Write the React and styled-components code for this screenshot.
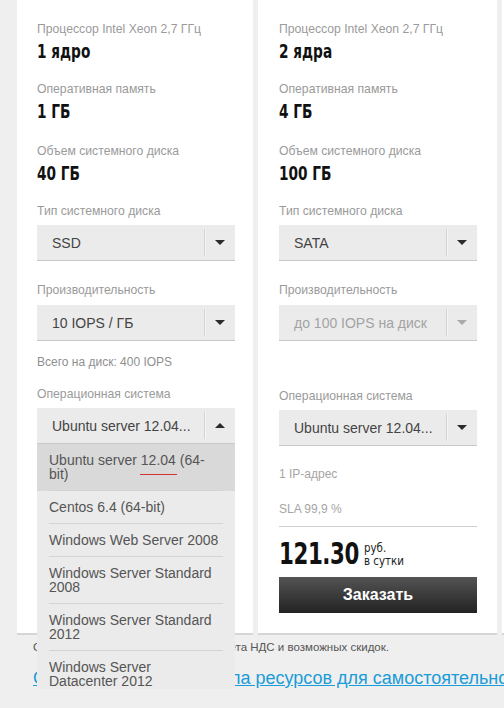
import React from "react";
import styled, { createGlobalStyle } from "styled-components";

const GlobalStyle = createGlobalStyle`
  body {
    margin: 0;
    background: #efefef;
    overflow: hidden;
    font-family: "Liberation Sans", Arial, sans-serif;
  }
`;

const Page = styled.div`
  width: max-content;
`;

const CardsRow = styled.div`
  display: flex;
  align-items: stretch;
  gap: 5px;
  padding-left: 17px;
`;

const Card = styled.div`
  flex-shrink: 0;
  width: ${(p) => p.$width}px;
  box-sizing: border-box;
  padding: 21px 20px 20px ${(p) => p.$padLeft ?? 20}px;
  background: #fff;
  box-shadow: 0 2px 0 #d5d5d5;
  display: flex;
  flex-direction: column;
`;

const Field = styled.div`
  margin-top: ${(p) => p.$mt ?? 0}px;
  display: flex;
  flex-direction: column;
`;

const Label = styled.div`
  font-size: 12.2px;
  line-height: 16px;
  color: #9a9a9a;
`;

// narrow DIN-like figures: condensed face squeezed a bit more
const Value = styled.div`
  margin-top: 3px;
  font-family: "DejaVu Sans Condensed", "DejaVu Sans", sans-serif;
  font-stretch: condensed;
  font-weight: bold;
  font-size: 19px;
  line-height: 22px;
  color: #111;
  transform: scaleX(0.8);
  transform-origin: left center;
`;

const SelectWrap = styled.div`
  position: relative;
  margin-top: ${(p) => p.$mt ?? 6}px;
  width: 198px;
`;

const SelectBox = styled.div`
  height: 36px;
  box-sizing: border-box;
  background: #ebebeb;
  border-bottom: 1px solid #c8c8c8;
  display: flex;
  align-items: center;
`;

const SelectText = styled.span`
  flex: 1;
  padding-left: 15px;
  font-size: 14px;
  color: ${(p) => (p.$disabled ? "#a3a3a3" : "#444")};
  white-space: nowrap;
  overflow: hidden;
`;

const ArrowCell = styled.span`
  width: 30px;
  align-self: stretch;
  margin: 4px 0;
  border-left: 1px solid #d3d3d3;
  box-shadow: inset 1px 0 0 #f6f6f6;
  display: flex;
  align-items: center;
  justify-content: center;
`;

const Arrow = styled.span`
  width: 0;
  height: 0;
  border-left: 5px solid transparent;
  border-right: 5px solid transparent;
  ${(p) =>
    p.$up
      ? `border-bottom: 5px solid ${p.$disabled ? "#aaa" : "#2b2b2b"};`
      : `border-top: 5px solid ${p.$disabled ? "#aaa" : "#2b2b2b"};`}
`;

const OptionList = styled.div`
  position: absolute;
  top: 100%;
  left: 0;
  width: 100%;
  background: #ebebeb;
  z-index: 10;
`;

const Option = styled.div`
  position: relative;
  padding: 0 12px;
  background: ${(p) => (p.$active ? "#d9d9d9" : "transparent")};

  ${(p) =>
    p.$active &&
    `&::after {
      content: "";
      position: absolute;
      left: 103px;
      top: 30px;
      width: 37px;
      height: 1px;
      background: #d8322e;
    }`}
`;

const OptionText = styled.div`
  padding: 9px 0 9px;
  border-bottom: 1px solid #d4d4d4;
  font-size: 14px;
  line-height: 14px;
  color: #555;
`;

const Hint = styled.div`
  margin-top: 13px;
  min-height: ${(p) => (p.$blank ? 18 : 16)}px;
  font-size: 12px;
  line-height: 16px;
  color: #8f8f8f;
`;

const Extra = styled.div`
  margin-top: ${(p) => p.$mt}px;
  font-size: 12px;
  line-height: 16px;
  color: #a5a5a5;
`;

const Divider = styled.div`
  margin-top: 9px;
  height: 1px;
  background: #cfcfcf;
`;

const PriceRow = styled.div`
  margin-top: 11px;
  display: flex;
  align-items: center;
  gap: 5px;
`;

const Price = styled.span`
  display: inline-block;
  font-family: "DejaVu Sans Condensed", "DejaVu Sans", sans-serif;
  font-stretch: condensed;
  font-weight: bold;
  font-size: 30px;
  line-height: 32px;
  color: #111;
  letter-spacing: -0.5px;
  transform: scaleX(0.79);
  transform-origin: left center;
  margin-right: -21px;
`;

const PriceUnit = styled.span`
  font-family: "DejaVu Sans Condensed", "DejaVu Sans", sans-serif;
  font-stretch: condensed;
  font-size: 13px;
  line-height: 13px;
  color: #222;
  transform: scaleX(0.88);
  transform-origin: left center;
`;

const OrderButton = styled.button`
  margin-top: 7px;
  height: 36px;
  width: 198px;
  border: 0;
  background: linear-gradient(#545454, #222);
  color: #fff;
  font-family: "Liberation Sans", Arial, sans-serif;
  font-weight: bold;
  font-size: 16px;
  cursor: pointer;
`;

const Footer = styled.div`
  padding: 6px 0 0 33px;
`;

const Note = styled.div`
  font-size: 11.5px;
  line-height: 16px;
  color: #555;
`;

const CalcLink = styled.a`
  display: block;
  margin-top: 12px;
  font-size: 18px;
  line-height: 22px;
  color: #1a9cd8;
  text-decoration: underline;
  white-space: nowrap;
`;

const Select = ({ text, disabled, open, options, mt }) => (
  <SelectWrap $mt={mt}>
    <SelectBox>
      <SelectText $disabled={disabled}>{text}</SelectText>
      <ArrowCell>
        <Arrow $up={open} $disabled={disabled} />
      </ArrowCell>
    </SelectBox>
    {open && (
      <OptionList>
        {options.map((o, i) => (
          <Option key={o} $active={i === 0}>
            <OptionText>{o}</OptionText>
          </Option>
        ))}
      </OptionList>
    )}
  </SelectWrap>
);

const osOptions = [
  "Ubuntu server 12.04 (64-bit)",
  "Centos 6.4 (64-bit)",
  "Windows Web Server 2008",
  "Windows Server Standard 2008",
  "Windows Server Standard 2012",
  "Windows Server Datacenter 2012",
];

const Specs = ({ cores, ram, disk }) => (
  <>
    <Field>
      <Label>Процессор Intel Xeon 2,7 ГГц</Label>
      <Value>{cores}</Value>
    </Field>
    <Field $mt={19}>
      <Label>Оперативная память</Label>
      <Value>{ram}</Value>
    </Field>
    <Field $mt={21}>
      <Label>Объем системного диска</Label>
      <Value>{disk}</Value>
    </Field>
  </>
);

export default function App() {
  return (
    <Page>
      <GlobalStyle />
      <CardsRow>
        <Card $width={236}>
          <Specs cores="1 ядро" ram="1 ГБ" disk="40 ГБ" />
          <Field $mt={19}>
            <Label>Тип системного диска</Label>
            <Select text="SSD" />
          </Field>
          <Field $mt={21}>
            <Label>Производительность</Label>
            <Select text="10 IOPS / ГБ" mt={7} />
          </Field>
          <Hint>Всего на диск: 400 IOPS</Hint>
          <Field $mt={16}>
            <Label>Операционная система</Label>
            <Select text="Ubuntu server 12.04..." open options={osOptions} />
          </Field>
        </Card>

        <Card $width={239} $padLeft={21}>
          <Specs cores="2 ядра" ram="4 ГБ" disk="100 ГБ" />
          <Field $mt={19}>
            <Label>Тип системного диска</Label>
            <Select text="SATA" />
          </Field>
          <Field $mt={21}>
            <Label>Производительность</Label>
            <Select text="до 100 IOPS на диск" disabled mt={7} />
          </Field>
          <Hint $blank />
          <Field $mt={16}>
            <Label>Операционная система</Label>
            <Select text="Ubuntu server 12.04..." />
          </Field>
          <Extra $mt={20}>1 IP-адрес</Extra>
          <Extra $mt={19}>SLA 99,9 %</Extra>
          <Divider />
          <PriceRow>
            <Price>121.30</Price>
            <PriceUnit>
              руб.
              <br />в сутки
            </PriceUnit>
          </PriceRow>
          <OrderButton>Заказать</OrderButton>
        </Card>

        <Card $width={236} />
      </CardsRow>

      <Footer>
        <Note>Стоимость всех услуг указана без учета НДС и возможных скидок.</Note>
        <CalcLink href="#">
          Онлайн-калькулятор пула ресурсов для самостоятельного управления
        </CalcLink>
      </Footer>
    </Page>
  );
}
